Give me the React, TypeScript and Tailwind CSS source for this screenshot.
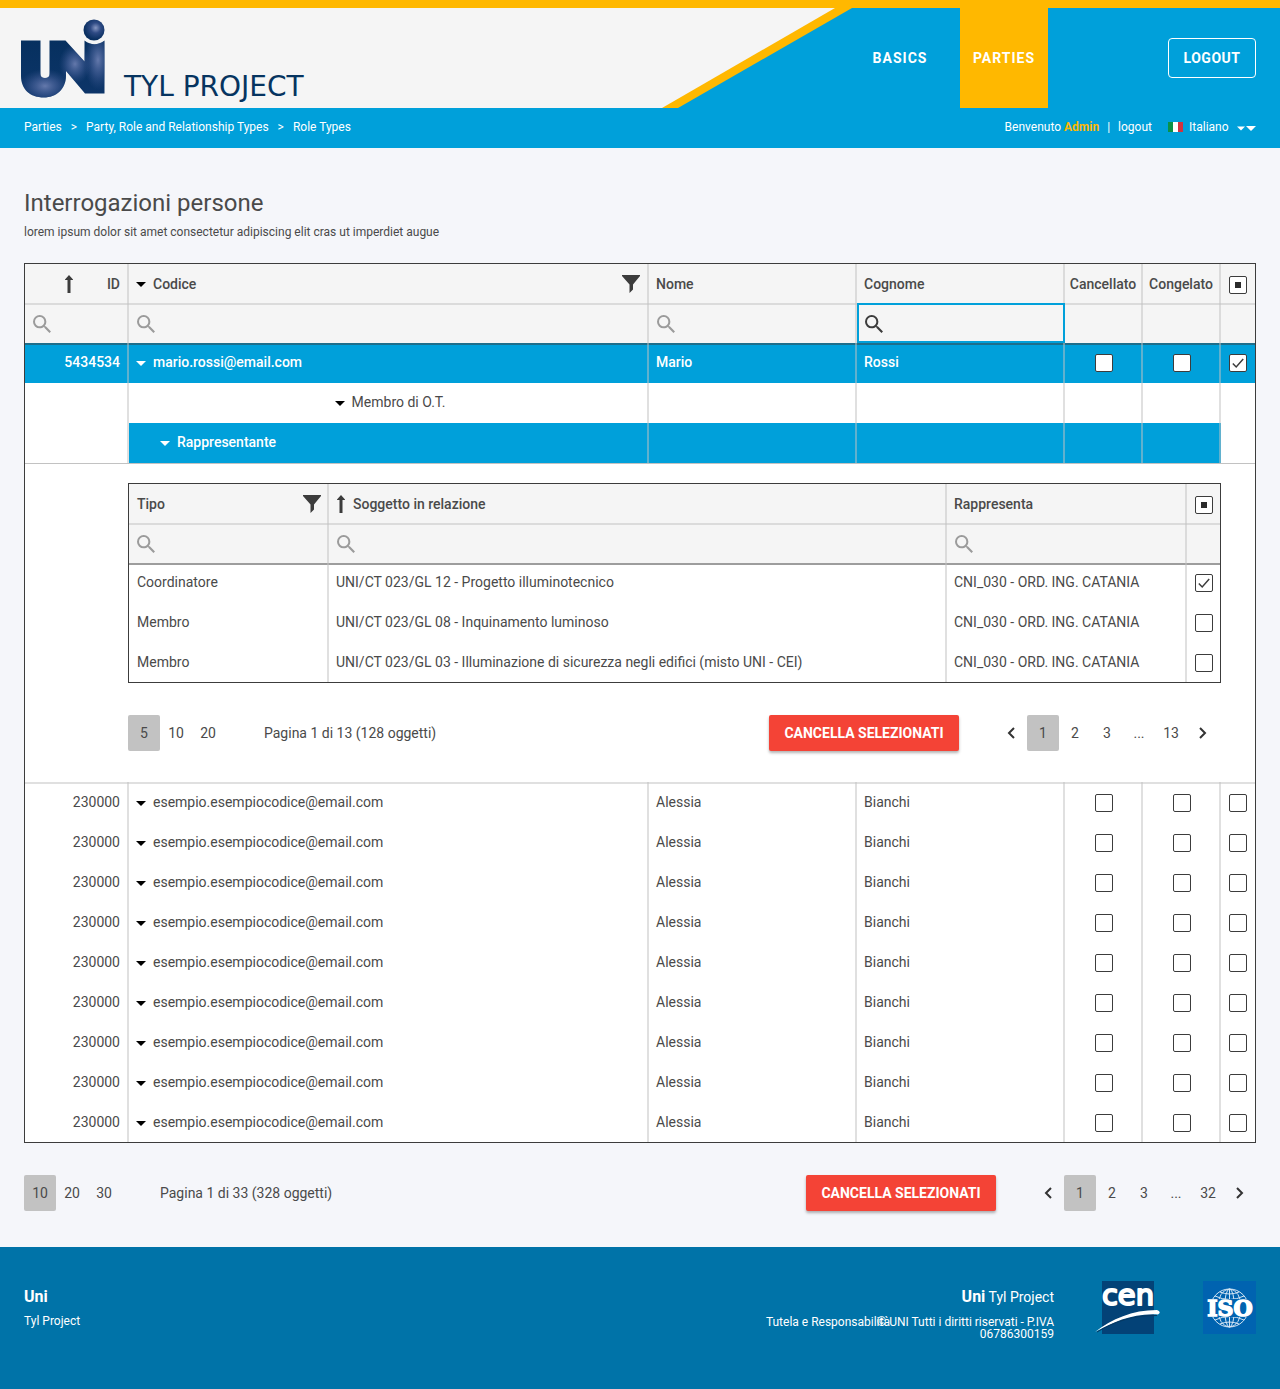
import { useId } from "react";
import type { ReactNode } from "react";

const rule = "shadow-[inset_-2px_0_0_#c2c2c280]";
const ruleTop = "shadow-[inset_-2px_0_0_#c2c2c280,inset_0_2px_0_#c2c2c280]";
const ruleDark = "shadow-[inset_-2px_0_0_#c2c2c280,inset_0_2px_0_#3c3c3c80]";
const topOnly = "shadow-[inset_0_2px_0_#c2c2c280]";
const topDarkOnly = "shadow-[inset_0_2px_0_#3c3c3c80]";

function UniLogo() {
  const id = useId();
  const body = id + "b";
  const ball = id + "c";
  const glow = id + "g";
  const shape =
    "M1 22.500H20.500V56Q20.500 60 25 60Q29.500 60 29.500 56V22.500H45.500L64.500 43.500V22.500Q74.500 30 84.500 22.500V75.500H65L46 53V58C46 71 36 79.500 24 79.500C10 79.500 1 71 1 58Z";
  return (
    <svg className="h-20 w-[86px]" viewBox="0 0 86 80" role="img" aria-label="UNI">
      <defs>
        <linearGradient id={body} x1="0" y1="0" x2="0" y2="1">
          <stop offset="0" stopColor="#06305f" />
          <stop offset="1" stopColor="#0d3569" />
        </linearGradient>
        <radialGradient id={glow}>
          <stop offset="0" stopColor="#7485b8" stopOpacity="0.85" />
          <stop offset="0.5" stopColor="#5369a3" stopOpacity="0.5" />
          <stop offset="1" stopColor="#3c5590" stopOpacity="0" />
        </radialGradient>
        <radialGradient id={ball} cx="0.58" cy="0.4" r="0.55">
          <stop offset="0" stopColor="#8697c2" />
          <stop offset="0.45" stopColor="#2e4a84" />
          <stop offset="1" stopColor="#092f60" />
        </radialGradient>
        <clipPath id={id + "p"}>
          <path d={shape} />
        </clipPath>
      </defs>
      <path d={shape} fill={"url(#" + body + ")"} />
      <g clipPath={"url(#" + id + "p)"}>
        <ellipse cx="25" cy="68" rx="26" ry="17" fill={"url(#" + glow + ")"} />
        <ellipse cx="78" cy="42" rx="14" ry="30" fill={"url(#" + glow + ")"} />
        <ellipse cx="55" cy="46" rx="16" ry="20" fill={"url(#" + glow + ")"} />
      </g>
      <circle cx="74" cy="12" r="10.500" fill={"url(#" + ball + ")"} />
    </svg>
  );
}

function CenLogo() {
  return (
    <svg className="h-[54px] w-[68px] overflow-visible" viewBox="0 0 68 54" role="img" aria-label="cen">
      <rect x="7" width="52" height="53" fill="#034277" />
      <text
        x="33"
        y="24"
        textAnchor="middle"
        fill="#fff"
        stroke="#fff"
        strokeWidth="2"
        strokeLinejoin="round"
        fontFamily="DejaVu Sans, sans-serif"
        fontSize="29"
      >
        cen
      </text>
      <path d="M0 51C17 38 37 29 62 29Q67 31 63 33.500C38 32 19 41 0 51Z" fill="#fff" />
      <path d="M2 51C19 41 38 34 62 34.500" fill="none" stroke="#063862" strokeWidth="1" />
    </svg>
  );
}

function IsoLogo() {
  return (
    <svg className="size-[53px]" viewBox="0 0 53 53" role="img" aria-label="ISO">
      <rect width="53" height="53" fill="#0063b0" />
      <g fill="none" stroke="#d4e5f4" strokeWidth="1">
        <circle cx="26.500" cy="27" r="19" />
        <ellipse cx="26.500" cy="27" rx="12" ry="19" />
        <ellipse cx="26.500" cy="27" rx="5" ry="19" />
        <path d="M26.500 8V46M12 15Q26.500 22 41 15M12 39Q26.500 32 41 39M17 11Q26.500 15 36 11M17 43Q26.500 39 36 43" />
      </g>
      <rect x="4" y="18" width="46" height="18" fill="#0063b0" />
      <text
        x="27"
        y="35"
        textAnchor="middle"
        fill="#fff"
        stroke="#fff"
        strokeWidth="1.500"
        fontFamily="DejaVu Serif, serif"
        fontWeight="700"
        fontSize="22"
      >
        ISO
      </text>
    </svg>
  );
}

function Caret({ className = "text-black" }: { className?: string }) {
  return (
    <svg className={"h-[5px] w-2.5 " + className} viewBox="0 0 10 5" fill="currentColor" aria-hidden="true">
      <path d="M0 0H10L5 5Z" />
    </svg>
  );
}

function Toggle({ className }: { className?: string }) {
  return (
    <button type="button" aria-label="Espandi" className="grid h-4 w-2.5 shrink-0 place-items-center pt-0.5">
      <Caret className={className} />
    </button>
  );
}

function SortArrow() {
  return (
    <button type="button" aria-label="Ordina">
      <svg className="h-[18px] w-2" viewBox="0 0 8 18" fill="#3c3c3c" aria-hidden="true">
        <path d="M4 0L8.500 5H5.500V18H2.500V5H-0.500Z" />
      </svg>
    </button>
  );
}

function FilterIcon() {
  return (
    <button type="button" aria-label="Filtra">
      <svg className="size-[18px]" viewBox="0 0 18 18" fill="#3c3c3c" aria-hidden="true">
        <path d="M0 0H18V1L11 9.500V14.500L7.500 18V9.500L0 1Z" />
      </svg>
    </button>
  );
}

function Search({ label, active = false }: { label: string; active?: boolean }) {
  return (
    <label
      className={
        active
          ? "flex h-10 items-center gap-1 px-2 pt-0.5 text-[#3c3c3c] outline-2 -outline-offset-2 outline-[#00a0da]"
          : "flex h-10 items-center gap-1 px-2 pt-0.5 text-[#9b9b9b]"
      }
    >
      <svg className="size-[18px] shrink-0" viewBox="3 3 17.500 17.500" fill="currentColor" aria-hidden="true">
        <path d="M15.500 14h-.79l-.28-.27A6.471 6.471 0 0 0 16 9.500 6.500 6.500 0 1 0 9.500 16c1.610 0 3.090-.59 4.230-1.570l.27.28v.79l5 4.990L20.490 19l-4.990-5zm-6 0C7.010 14 5 11.990 5 9.500S7.010 5 9.500 5 14 7.010 14 9.500 11.990 14 9.500 14z" />
      </svg>
      <input type="text" aria-label={label} className="w-full min-w-0 bg-transparent outline-none" />
    </label>
  );
}

function Check({ label, state = "off" }: { label: string; state?: "off" | "on" | "mixed" }) {
  return (
    <span className="mx-auto mt-0.5 grid size-[18px] place-items-center">
      <input
        type="checkbox"
        aria-label={label}
        defaultChecked={state === "on"}
        className="col-start-1 row-start-1 size-[18px] appearance-none rounded-xs border border-[#3c3c3c] bg-white"
      />
      {state === "on" && (
        <svg className="pointer-events-none col-start-1 row-start-1 size-3" viewBox="0 0 12 12" aria-hidden="true">
          <path d="M0.800 6.500L4.200 10L11.200 2" fill="none" stroke="#3c3c3c" strokeWidth="1.500" />
        </svg>
      )}
      {state === "mixed" && <span className="pointer-events-none col-start-1 row-start-1 size-1.5 bg-[#2b2b2b]" />}
    </span>
  );
}

function PageButton({ children, active = false, label }: { children: ReactNode; active?: boolean; label?: string }) {
  return (
    <button
      type="button"
      aria-label={label}
      aria-current={active ? "page" : undefined}
      className={
        active
          ? "grid h-9 w-8 place-items-center rounded-xs bg-[#c2c2c2]"
          : "grid h-9 w-8 place-items-center rounded-xs"
      }
    >
      {children}
    </button>
  );
}

function Chevron({ d }: { d: string }) {
  return (
    <svg className="h-3 w-2" viewBox="0 0 8 12" fill="none" stroke="#333" strokeWidth="2" aria-hidden="true">
      <path d={d} />
    </svg>
  );
}

function Pager({ sizes, summary, last }: { sizes: string[]; summary: string; last: string }) {
  return (
    <div className="flex items-center text-sm text-[#4a4a4a]">
      <div className="flex">
        {sizes.map((s, i) => (
          <PageButton key={s} active={i === 0}>
            {s}
          </PageButton>
        ))}
      </div>
      <p className="ml-10">{summary}</p>
      <button
        type="button"
        className="ml-auto h-9 w-[190px] rounded-xs bg-[#f44336] font-bold text-white shadow-[0_2px_3px_rgba(0,0,0,0.3)]"
      >
        CANCELLA SELEZIONATI
      </button>
      <nav aria-label="Pagine" className="ml-9 flex">
        <PageButton label="Pagina precedente">
          <Chevron d="M7 1L2 6L7 11" />
        </PageButton>
        <PageButton active>1</PageButton>
        <PageButton>2</PageButton>
        <PageButton>3</PageButton>
        <span className="grid h-9 w-8 place-items-center">...</span>
        <PageButton>{last}</PageButton>
        <PageButton label="Pagina successiva">
          <Chevron d="M1 1L6 6L1 11" />
        </PageButton>
      </nav>
    </div>
  );
}

const relations = [
  ["Coordinatore", "UNI/CT 023/GL 12 - Progetto illuminotecnico"],
  ["Membro", "UNI/CT 023/GL 08 - Inquinamento luminoso"],
  ["Membro", "UNI/CT 023/GL 03 - Illuminazione di sicurezza negli edifici (misto UNI - CEI)"],
];

function RelationsTable() {
  return (
    <table className="w-full table-fixed border-separate border-spacing-0 border border-[#3c3c3c] text-left">
      <colgroup>
        <col className="w-[200px]" />
        <col />
        <col className="w-60" />
        <col className="w-[33px]" />
      </colgroup>
      <thead className="bg-[#f5f5f5]">
        <tr className="h-[39px]">
          <th className={"px-2 font-medium " + rule}>
            <div className="flex items-center justify-between">
              Tipo <FilterIcon />
            </div>
          </th>
          <th className={"px-2 font-medium " + rule}>
            <div className="flex items-center gap-2">
              <SortArrow /> Soggetto in relazione
            </div>
          </th>
          <th className={"px-[7px] font-medium " + rule}>Rappresenta</th>
          <th>
            <Check label="Seleziona tutte le relazioni" state="mixed" />
          </th>
        </tr>
        <tr className="h-10">
          <td className={ruleTop}>
            <Search label="Cerca tipo" />
          </td>
          <td className={ruleTop}>
            <Search label="Cerca soggetto" />
          </td>
          <td className={ruleTop}>
            <Search label="Cerca rappresenta" />
          </td>
          <td className={topOnly} />
        </tr>
      </thead>
      <tbody>
        {relations.map(([kind, subject], i) => {
          const line = i === 0 ? ruleDark : rule;
          return (
            <tr key={subject} className={i === 2 ? "h-[39px]" : "h-10"}>
              <td className={"px-2 pb-0.5 " + line}>{kind}</td>
              <td className={"px-[7px] pb-0.5 " + line}>{subject}</td>
              <td className={"px-[7px] pb-0.5 " + line}>CNI_030 - ORD. ING. CATANIA</td>
              <td className={i === 0 ? "pb-0.5 " + topDarkOnly : "pb-0.5"}>
                <Check label={"Seleziona " + subject} state={i === 0 ? "on" : "off"} />
              </td>
            </tr>
          );
        })}
      </tbody>
    </table>
  );
}

function PeopleTable() {
  const rows = Array.from({ length: 9 }, (_, i) => i);
  return (
    <table className="w-full table-fixed border-separate border-spacing-0 border border-[#3c3c3c] bg-white text-left text-sm text-[#4a4a4a]">
      <colgroup>
        <col className="w-[104px]" />
        <col />
        <col className="w-52" />
        <col className="w-52" />
        <col className="w-[78px]" />
        <col className="w-[78px]" />
        <col className="w-[34px]" />
      </colgroup>
      <thead className="bg-[#f5f5f5]">
        <tr className="h-[39px]">
          <th className={"px-[9px] font-medium " + rule}>
            <div className="flex items-center justify-between pl-[31px]">
              <SortArrow /> ID
            </div>
          </th>
          <th className={"px-[7px] font-medium " + rule}>
            <div className="flex items-center gap-[7px]">
              <Toggle /> Codice
              <span className="ml-auto flex pr-0.5">
                <FilterIcon />
              </span>
            </div>
          </th>
          <th className={"px-[7px] font-medium " + rule}>Nome</th>
          <th className={"px-[7px] font-medium " + rule}>Cognome</th>
          <th className={"pr-0.5 text-center font-medium " + rule}>Cancellato</th>
          <th className={"pr-0.5 text-center font-medium " + rule}>Congelato</th>
          <th>
            <Check label="Seleziona tutti" state="mixed" />
          </th>
        </tr>
        <tr className="h-10">
          <td className={ruleTop}>
            <Search label="Cerca ID" />
          </td>
          <td className={ruleTop}>
            <Search label="Cerca codice" />
          </td>
          <td className={ruleTop}>
            <Search label="Cerca nome" />
          </td>
          <td className={ruleTop}>
            <Search label="Cerca cognome" active />
          </td>
          <td className={ruleTop} />
          <td className={ruleTop} />
          <td className={topOnly} />
        </tr>
      </thead>
      <tbody>
        <tr className="h-10 bg-[#00a0da] text-white">
          <td className={"px-[9px] pb-0.5 text-right font-medium " + ruleDark}>5434534</td>
          <td className={"px-[7px] pb-0.5 font-medium " + ruleDark}>
            <div className="flex items-center gap-[7px]">
              <Toggle className="text-white" /> mario.rossi@email.com
            </div>
          </td>
          <td className={"px-[7px] pb-0.5 font-medium " + ruleDark}>Mario</td>
          <td className={"px-[7px] pb-0.5 font-medium " + ruleDark}>Rossi</td>
          <td className={"pb-0.5 " + ruleDark}>
            <Check label="Cancellato" />
          </td>
          <td className={"pb-0.5 " + ruleDark}>
            <Check label="Congelato" />
          </td>
          <td className={"pb-0.5 " + topDarkOnly}>
            <Check label="Seleziona riga" state="on" />
          </td>
        </tr>
        <tr className="h-10">
          <td className={rule} />
          <td className={"pb-0.5 pl-0.5 " + rule}>
            <div className="flex items-center justify-center gap-[7px]">
              <Toggle /> Membro di O.T.
            </div>
          </td>
          <td className={rule} />
          <td className={rule} />
          <td className={rule} />
          <td className={rule} />
          <td />
        </tr>
        <tr className="h-10 bg-[#00a0da] font-medium text-white">
          <td className={"bg-white " + rule} />
          <td className={"pb-0.5 pl-[31px] " + rule}>
            <div className="flex items-center gap-[7px]">
              <Toggle className="text-white" /> Rappresentante
            </div>
          </td>
          <td className={rule} />
          <td className={rule} />
          <td className={rule} />
          <td className={rule} />
          <td className="bg-white" />
        </tr>
        <tr>
          <td colSpan={7} className="border-t border-[#c2c2c2] pt-[19px] pr-[34px] pb-[31px] pl-[103px]">
            <RelationsTable />
            <div className="pt-8 pr-0.5">
              <Pager sizes={["5", "10", "20"]} summary="Pagina 1 di 13 (128 oggetti)" last="13" />
            </div>
          </td>
        </tr>
        {rows.map((i) => {
          const line = i === 0 ? ruleTop : rule;
          return (
            <tr key={i} className="h-10">
              <td className={"px-[9px] text-right " + line}>230000</td>
              <td className={"px-[7px] " + line}>
                <div className="flex items-center gap-[7px]">
                  <Toggle /> esempio.esempiocodice@email.com
                </div>
              </td>
              <td className={"px-[7px] " + line}>Alessia</td>
              <td className={"px-[7px] " + line}>Bianchi</td>
              <td className={line}>
                <Check label="Cancellato" />
              </td>
              <td className={line}>
                <Check label="Congelato" />
              </td>
              <td className={i === 0 ? topOnly : ""}>
                <Check label="Seleziona riga" />
              </td>
            </tr>
          );
        })}
      </tbody>
    </table>
  );
}

export default function App() {
  return (
    <div className="flex min-h-screen flex-col bg-[#f5f6fa] font-['Roboto',sans-serif]">
      <header>
        <div className="h-2 bg-[#ffb800]" />
        <div className="relative flex h-[100px] justify-between bg-[#f5f5f5]">
          <svg className="absolute top-0 right-0 h-[100px] w-[618px]" viewBox="0 0 618 100" aria-hidden="true">
            <path d="M173 0H618V100H0Z" fill="#ffb800" />
            <path d="M190 0H618V100H16Z" fill="#00a0da" />
          </svg>
          <div className="flex items-end gap-[18px] pb-2.5 pl-5">
            <UniLogo />
            <h1 className="font-['DejaVu_Sans',sans-serif] text-[28px] leading-[22px] text-[#063460]">TYL PROJECT</h1>
          </div>
          <div className="relative flex items-center pr-6 text-sm font-bold text-white">
            <nav className="flex h-full gap-4 tracking-[1px]">
              <a href="#basics" className="grid w-[88px] place-items-center">
                BASICS
              </a>
              <a href="#parties" className="grid w-[88px] place-items-center bg-[#ffb800]">
                PARTIES
              </a>
            </nav>
            <button type="button" className="ml-[120px] h-10 w-[88px] rounded-sm border border-white tracking-[0.5px]">
              LOGOUT
            </button>
          </div>
        </div>
        <div className="flex h-10 items-center justify-between bg-[#00a0da] px-6 pb-0.5 text-xs text-white">
          <nav aria-label="Breadcrumb" className="flex gap-[9px]">
            <a href="#parties">Parties</a>
            <span>&gt;</span>
            <a href="#types">Party, Role and Relationship Types</a>
            <span>&gt;</span>
            <a href="#roles">Role Types</a>
          </nav>
          <div className="flex items-center">
            <span>
              Benvenuto <b className="font-bold text-[#ffb800]">Admin</b>
            </span>
            <span className="mx-2">|</span>
            <a href="#logout">logout</a>
            <svg className="ml-4 h-2.5 w-[15px]" viewBox="0 0 15 10" aria-hidden="true">
              <path d="M0 0H5V10H0Z" fill="#0a9247" />
              <path d="M5 0H10V10H5Z" fill="#fff" />
              <path d="M10 0H15V10H10Z" fill="#d03340" />
            </svg>
            <select aria-label="Lingua" className="ml-1.5 w-12 appearance-none bg-transparent">
              <option>Italiano</option>
            </select>
            <svg className="mt-0.5 h-[5px] w-[19px]" viewBox="0 0 19 5" fill="#fff" aria-hidden="true">
              <path d="M0 0.500H8L4 4.500ZM9 0H19L14 5Z" />
            </svg>
          </div>
        </div>
      </header>

      <main className="flex-1 px-6 pt-10 pb-9 text-[#4a4a4a]">
        <h2 className="text-2xl leading-[30px]">Interrogazioni persone</h2>
        <p className="mt-1.5 mb-[23px] text-xs">lorem ipsum dolor sit amet consectetur adipiscing elit cras ut imperdiet augue</p>
        <PeopleTable />
        <div className="pt-8">
          <Pager sizes={["10", "20", "30"]} summary="Pagina 1 di 33 (328 oggetti)" last="32" />
        </div>
      </main>

      <footer className="flex h-[142px] justify-between bg-[#0073a8] px-6 text-xs text-white">
        <div className="pt-[38px]">
          <p className="text-base font-bold">Uni</p>
          <p className="mt-1">Tyl Project</p>
        </div>
        <div className="flex">
          <div className="w-[182px] pt-[38px] text-right">
            <p className="text-sm leading-6">
              <b className="text-base">Uni</b> Tyl Project
            </p>
            <div className="relative mt-[7px] leading-3">
              <p className="absolute top-0 right-[164px] whitespace-nowrap">Tutela e Responsabilità</p>
              <p>© UNI Tutti i diritti riservati - P.IVA 06786300159</p>
            </div>
          </div>
          <div className="ml-[41px] flex gap-10 pt-[34px]">
            <CenLogo />
            <IsoLogo />
          </div>
        </div>
      </footer>
    </div>
  );
}
